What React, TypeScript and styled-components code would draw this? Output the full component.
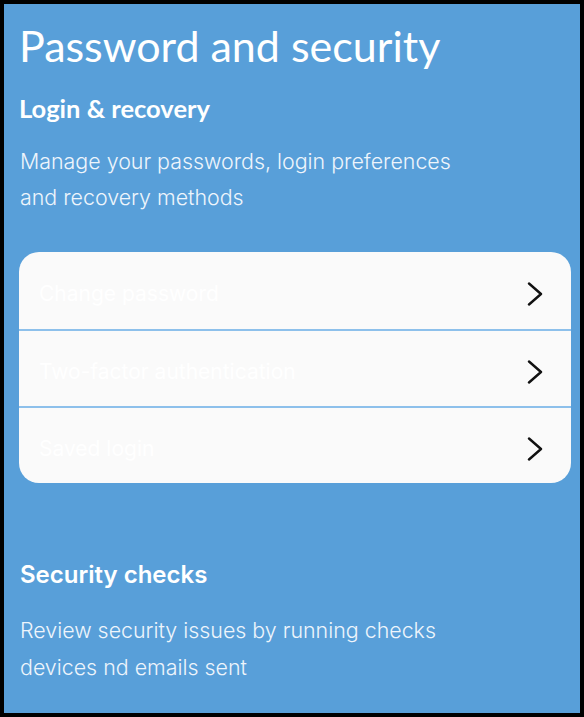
import React from "react";
import styled, { createGlobalStyle } from "styled-components";

const GlobalStyle = createGlobalStyle`
  html, body {
    margin: 0;
    padding: 0;
    background: #000;
  }
  * {
    box-sizing: border-box;
  }
`;

const Frame = styled.main`
  height: 717px;
  width: 584px;
  border: 4px solid #000;
  background: #589fd9;
  padding: 16px 9px 0 15px;
  color: #fff;
  font-family: Inter, "Noto Sans", sans-serif;
`;

const Title = styled.h1`
  font-family: Lato, "Liberation Sans", sans-serif;
  font-weight: 400;
  font-size: 43px;
  line-height: 52px;
  margin: 0;
`;

const SubTitle = styled.h2`
  font-family: Lato, "Liberation Sans", sans-serif;
  font-weight: 700;
  font-size: 25.5px;
  line-height: 30px;
  margin: 21px 0 0 0;
`;

const ChecksTitle = styled.h2`
  font-family: Inter, "Noto Sans", sans-serif;
  font-weight: 600;
  font-size: 24px;
  line-height: 30px;
  margin: 0;
  padding-left: 1px;
`;

const Description = styled.p<{ $top: number; $lh: number }>`
  font-size: 21.4px;
  font-weight: 300;
  line-height: ${(p) => p.$lh}px;
  margin: ${(p) => p.$top}px 0 0 1px;
  color: #eef5fc;
`;

const Card = styled.ul`
  list-style: none;
  margin: 37px 0 0 0;
  padding: 0;
  background: #fafafa;
  border-radius: 20px;
  overflow: hidden;
`;

const Row = styled.li`
  height: 77px;
  display: flex;
  align-items: center;
  justify-content: space-between;
  padding: 6px 28px 0 20px;
  font-size: 21px;
  font-weight: 400;
  color: #ffffff;
  & + & {
    border-top: 2px solid #8dc0eb;
  }
`;

const Chevron = () => (
  <svg width="16" height="24" viewBox="0 0 16 24" fill="none">
    <path d="M2 1.5 L14 12 L2 22.5" stroke="#111" strokeWidth="2.4" strokeLinecap="round" strokeLinejoin="round" />
  </svg>
);

const Checks = styled.section`
  margin-top: 77px;
`;

const items = ["Change password", "Two-factor authentication", "Saved login"];

const App = () => {
  return (
    <>
      <GlobalStyle />
      <Frame>
        <Title>Password and security</Title>
        <SubTitle>Login &amp; recovery</SubTitle>
        <Description $top={20} $lh={36}>
          Manage your passwords, login preferences
          <br />
          and recovery methods
        </Description>
        <Card>
          {items.map((item) => (
            <Row key={item}>
              <span>{item}</span>
              <Chevron />
            </Row>
          ))}
        </Card>
        <Checks>
          <ChecksTitle>Security checks</ChecksTitle>
          <Description $top={22} $lh={37}>
            Review security issues by running checks
            <br />
            devices nd emails sent
          </Description>
        </Checks>
      </Frame>
    </>
  );
};

export default App;
